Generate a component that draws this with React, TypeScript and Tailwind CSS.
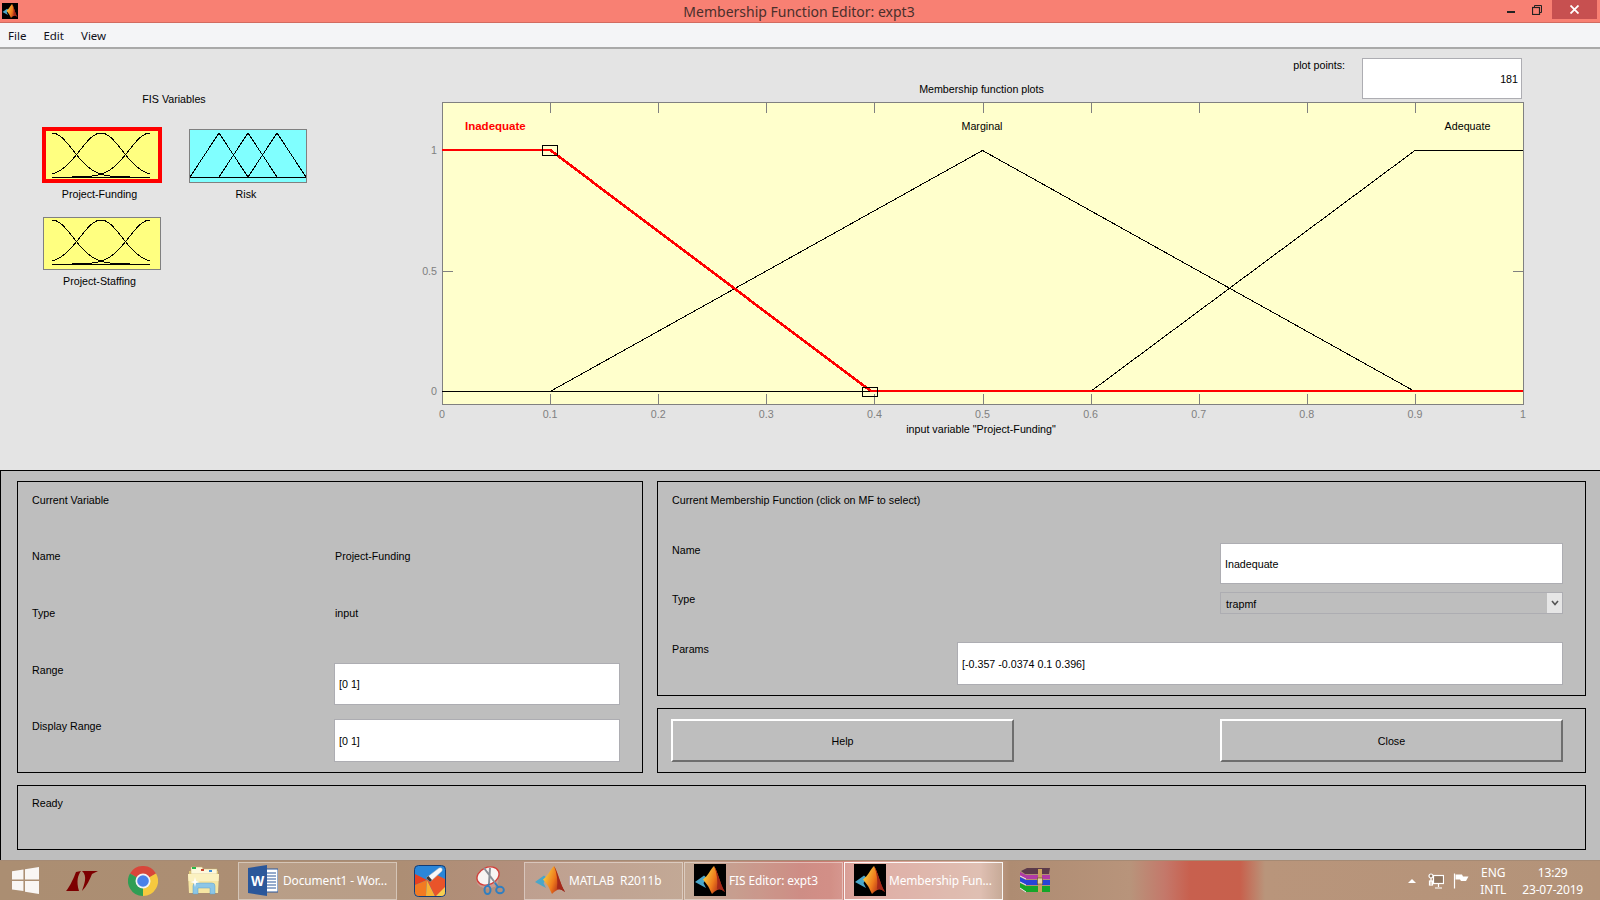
import React, { useId } from 'react';

const PX = (v: number) => 442 + 1081 * v;
const Y1 = 150.5;
const Y0 = 391.5;
const TICKS = [0, 0.1, 0.2, 0.3, 0.4, 0.5, 0.6, 0.7, 0.8, 0.9, 1];

// gaussian curve for the little mf thumbnails
function gaussPath(center: number) {
  const pts: string[] = [];
  for (let x = 9; x <= 107; x += 1) {
    const g = Math.exp(-((x - center) ** 2) / (2 * 21 * 21));
    pts.push(`${x},${(48 - 44 * g).toFixed(1)}`);
  }
  return `M${pts.join(' L')}`;
}

function GaussThumb() {
  return (
    <svg width="116" height="56" viewBox="0 0 116 56" className="block" shapeRendering="crispEdges">
      <path d={gaussPath(9)} fill="none" stroke="#000" />
      <path d={gaussPath(58)} fill="none" stroke="#000" />
      <path d={gaussPath(107)} fill="none" stroke="#000" />
      <path d="M9 48.5H107" stroke="#000" />
    </svg>
  );
}

function TriThumb() {
  return (
    <svg width="116" height="52" viewBox="0 0 116 52" className="block" shapeRendering="crispEdges">
      <path d="M0 47 L29 3 L58 47 M29 47 L58 3 L87 47 M58 47 L87 3 L116 47" fill="none" stroke="#000" />
      <path d="M0 47.5H116" stroke="#000" />
    </svg>
  );
}

function MatlabIcon({ black, size = 32 }: { black?: boolean; size?: number }) {
  const id = useId();
  return (
    <svg width={size} height={size} viewBox="0 0 32 32" className="shrink-0">
      <defs>
        <linearGradient id={id} x1="0.1" y1="0.3" x2="1" y2="0.7">
          <stop offset="0" stopColor="#f7c23a" />
          <stop offset="0.45" stopColor="#ee7a1c" />
          <stop offset="0.8" stopColor="#b5321a" />
          <stop offset="1" stopColor="#7d1c14" />
        </linearGradient>
      </defs>
      {black && <rect width="32" height="32" fill="#000" />}
      <path d="M1 18 L10 11.5 L13 14 L9.5 19 L12 24 Z" fill="#4aa6c9" />
      <path d="M9 15.5 C14 12 16 6 20 2 C24 8 26 20 31 28 C26 24 23 25 18 30 C16 26 15 23 12.5 20 Z" fill={`url(#${id})`} />
      <path d="M20 2 C24 8 26 20 31 28 C27 25 25 24 23 25 C24 17 23 9 20 2 Z" fill="#a3281a" />
    </svg>
  );
}

function WindowsLogo() {
  return (
    <svg width="27" height="27" viewBox="0 0 26 26">
      <g fill="#fff" fillOpacity="0.92">
        <polygon points="0,4 11,2.4 11,12 0,12" />
        <polygon points="12.5,2.2 26,0 26,12 12.5,12" />
        <polygon points="0,13.5 11,13.5 11,23 0,21.6" />
        <polygon points="12.5,13.5 26,13.5 26,26 12.5,23.8" />
      </g>
    </svg>
  );
}

function LtLogo() {
  return (
    <svg width="32" height="20" viewBox="0 0 32 20">
      <g fill="#7d0000">
        <path d="M10 1 L15 0 C12 4 10 10 13 20 L0 20 C3 17 6 10 8 6 Z" />
        <path d="M16 0 L32 0 L26 3 C24 8 21 15 16 20 C18 14 22 5 16 0 Z" />
      </g>
    </svg>
  );
}

function ChromeIcon() {
  return (
    <svg width="30" height="30" viewBox="0 0 30 30">
      <path d="M15 15 L2 7.5 A15 15 0 0 1 28 7.5 Z" fill="#d8463a" />
      <path d="M15 15 L28 7.5 A15 15 0 0 1 15 30 Z" fill="#f6c93f" />
      <path d="M15 15 L15 30 A15 15 0 0 1 2 7.5 Z" fill="#2f9e54" />
      <circle cx="15" cy="15" r="7.5" fill="#f4f4f4" />
      <circle cx="15" cy="15" r="5.8" fill="#4a80e8" />
    </svg>
  );
}

function FolderIcon() {
  return (
    <svg width="32" height="29" viewBox="0 0 32 29">
      <path d="M1 5 H30 V25 H1 Z" fill="#e0c878" />
      <path d="M3 1 H14 L15 3 H29 V8 H3 Z" fill="#fdf8dc" stroke="#cbb36a" strokeWidth="0.5" />
      <rect x="4" y="1" width="4" height="2" fill="#27b84a" />
      <rect x="13" y="3" width="3" height="2" fill="#c9472f" />
      <rect x="21" y="4" width="3" height="2" fill="#3e8fd8" />
      <path d="M0 8 H31 L30 27 H1 Z" fill="#f6e6a2" />
      <path d="M0 8 H31 L30.5 15 H0.5 Z" fill="#fbf1c0" />
      <path d="M5 28 V20 Q5 17 8 17 H24 Q27 17 27 20 V28 H22 V22 H10 V28 Z" fill="#8cc6e6" stroke="#5e9fc4" strokeWidth="0.5" />
      <path d="M7 11 L8 15 L12 16 L8 17 L7 21 L6 17 L2 16 L6 15 Z" fill="#fff" />
    </svg>
  );
}

function WordIcon() {
  return (
    <svg width="30" height="31" viewBox="0 0 30 31" className="mr-[2px]">
      <rect x="14" y="4" width="16" height="23" fill="#fff" stroke="#2b579a" />
      <path d="M18 8H28M18 11H28M18 14H28M18 17H28M18 20H28M18 23H28" stroke="#2b579a" />
      <path d="M0 3 L19 0 V31 L0 28 Z" fill="#2b579a" />
      <text x="9.5" y="21" textAnchor="middle" fill="#fff" fontSize="14" fontWeight="700" fontFamily="'Liberation Sans', sans-serif">W</text>
    </svg>
  );
}

function RocketIcon() {
  return (
    <svg width="32" height="32" viewBox="0 0 32 32">
      <rect x="0.5" y="0.5" width="31" height="31" rx="4" fill="#2a86d8" stroke="#123c74" />
      <path d="M13 15 L1 9 V20 Z" fill="#e8401f" />
      <path d="M13 15 L1 20 V27 Q1 31 5 31 H12 Z" fill="#f27a22" />
      <path d="M13 15 L12 31 H21 Z" fill="#f9b233" />
      <path d="M13 15 L21 31 H27 Q31 31 31 27 V14 L21 9 Z" fill="#e9542a" />
      <path d="M22 31 L31 22 V27 Q31 31 27 31 Z" fill="#f5cf52" />
      <path d="M12 13 L25 3 Q29 2 28 6 L16 17 Z" fill="#f8f8f8" stroke="#b9b9b9" strokeWidth="0.5" />
      <path d="M12 13 L14.5 11 L18 15 L16 17 Z" fill="#3a3a3a" />
    </svg>
  );
}

function ScissorsIcon() {
  return (
    <svg width="30" height="32" viewBox="0 0 30 32">
      <ellipse cx="11.5" cy="16" rx="11" ry="7.5" fill="#c99a90" />
      <ellipse cx="12" cy="11" rx="11.5" ry="8.5" transform="rotate(-25 12 11)" fill="#f7f4f2" stroke="#d23f3a" strokeWidth="1.4" />
      <path d="M8 3 L20 19 M14 3 L13 19" stroke="#8a8f96" strokeWidth="2" />
      <ellipse cx="11.5" cy="25" rx="3" ry="4" fill="none" stroke="#2f7fc1" strokeWidth="2" />
      <ellipse cx="24" cy="25" rx="3.8" ry="3.2" fill="none" stroke="#2f7fc1" strokeWidth="2" />
      <path d="M13 19 L12 21 M19 18 L22 22" stroke="#2f7fc1" strokeWidth="2" />
    </svg>
  );
}

function RarIcon() {
  return (
    <svg width="32" height="25" viewBox="0 0 32 25">
      <path d="M2 3 L8 0 H31 L30 6 H6 Z" fill="#5c3a4a" />
      <path d="M1 4 L7 7 H31 V11 H7 L1 8 Z" fill="#b23aa6" />
      <path d="M1 9 L7 12 H31 V17 H7 L1 14 Z" fill="#2743d8" />
      <path d="M1 15 L7 18 H31 V24 H7 L1 20 Z" fill="#15a629" />
      <path d="M1 8 L7 11 M1 14 L7 17 M1 20 L7 24" stroke="#eee" />
      <rect x="19" y="1" width="4" height="23" fill="#caa25e" />
      <rect x="18.5" y="10" width="5" height="6" fill="#e6d3a6" stroke="#6b4b22" strokeWidth="0.6" />
    </svg>
  );
}

function NetworkIcon() {
  return (
    <svg width="16" height="16" viewBox="0 0 16 16" fill="none" stroke="#fff" strokeWidth="1.2">
      <rect x="5.5" y="2.5" width="10" height="8" fill="#5a4a3e" fillOpacity="0.4" />
      <path d="M10.5 11V14M7 15H14" />
      <circle cx="3" cy="3" r="2" fill="#5a4a3e" fillOpacity="0.4" />
      <path d="M3 5V11" />
      <rect x="1.5" y="8" width="3" height="4" />
    </svg>
  );
}

function FlagIcon() {
  return (
    <svg width="16" height="16" viewBox="0 0 16 16">
      <path d="M1.5 0.5V15.5" stroke="#fff" strokeWidth="1.2" />
      <path d="M2.5 1.5 H9 L10 3.5 H15.5 L13 8 H8 L7 6.5 H2.5 Z" fill="#fff" />
    </svg>
  );
}

function Pin({ width, children }: { width: string; children: React.ReactNode }) {
  return <div className={`${width} h-full flex items-center justify-center shrink-0`}>{children}</div>;
}

function TaskButton({ icon, label, active }: { icon: React.ReactNode; label: string; active?: boolean }) {
  return (
    <div
      className={`w-[159px] h-[38px] mr-px shrink-0 flex items-center gap-[3px] pl-[9px] pb-px border ${
        active ? 'border-white/90 bg-white/20' : 'border-white/40 bg-white/15'
      }`}
    >
      {icon}
      <span className="text-[11.9px] text-white whitespace-pre tracking-[-0.1px]">{label}</span>
    </div>
  );
}

function Field({ value, className }: { value: string; className: string }) {
  return (
    <input
      readOnly
      value={value}
      className={`${className} bg-white border border-[#adadb2] pl-1 text-[10.7px] text-black outline-none`}
    />
  );
}

function PlotArea() {
  return (
    <svg width="1120" height="336" viewBox="420 102 1120 336" className="block -ml-[22px]">
      <rect x="442.5" y="102.5" width="1081" height="302" fill="#ffffcc" stroke="#808080" />
      <g stroke="#808080" shapeRendering="crispEdges">
        {TICKS.slice(1, -1).map((t) => (
          <path key={t} d={`M${Math.round(PX(t)) + 0.5} 103V113M${Math.round(PX(t)) + 0.5} 404V394`} />
        ))}
        <path d="M443 271.5H453M1523 271.5H1513" />
      </g>
      <g fontFamily="'Liberation Sans', sans-serif" fontSize="10.7" fill="#808080">
        {TICKS.map((t) => (
          <text key={t} x={PX(t)} y={418} textAnchor="middle">
            {t}
          </text>
        ))}
        <text x="437" y="154" textAnchor="end">1</text>
        <text x="437" y="275" textAnchor="end">0.5</text>
        <text x="437" y="395" textAnchor="end">0</text>
      </g>
      <g fontFamily="'Liberation Sans', sans-serif" fontSize="10.7" fill="#000">
        <text x="981" y="433" textAnchor="middle">input variable "Project-Funding"</text>
        <text x="982" y="130" textAnchor="middle">Marginal</text>
        <text x="1467.5" y="130" textAnchor="middle">Adequate</text>
        <text x="465" y="130" fill="#ff0000" fontWeight="700" fontSize="11.5">Inadequate</text>
      </g>
      <g fill="none" shapeRendering="crispEdges">
        <path d={`M442 ${Y0} H${PX(0.1)} L${PX(0.5)} ${Y1} L${PX(0.9)} ${Y0} H1523`} stroke="#000" />
        <path d={`M442 ${Y0} H${PX(0.6)} L${PX(0.9)} ${Y1} H1523`} stroke="#000" />
        <path d={`M442 ${Y1 - 0.5} H${PX(0.1)} M${PX(0.396)} 390.5 H1523`} stroke="#ff0000" strokeWidth="2" />
        <path d={`M${PX(0.1)} ${Y1 - 0.5} L${PX(0.396)} 390.5`} stroke="#ff0000" strokeWidth="2.6" />
        <rect x="542.5" y="145.5" width="15" height="10" stroke="#000" />
        <rect x="862.5" y="387.5" width="15" height="9" stroke="#000" />
      </g>
    </svg>
  );
}

export default function App() {
  return (
    <div className="w-[1600px] h-[900px] overflow-hidden flex flex-col font-['Liberation_Sans',sans-serif] text-[10.7px] leading-[14px] text-black">
      {/* window chrome */}
      <div className="h-[23px] shrink-0 bg-[#f88073] border-b border-[#d26b60] flex items-center relative">
        <div className="ml-[2px]">
          <MatlabIcon black size={16} />
        </div>
        <span className="flex-1 text-center pl-[73px] pt-px text-[14px] text-[#4a2f2b] font-['Noto_Sans',sans-serif] leading-[22px]">
          Membership Function Editor: expt3
        </span>
        <div className="flex items-start self-start h-[19px]">
          <span className="mt-[11px] w-2 h-[2px] bg-[#222] mr-[17px]" />
          <svg width="10" height="10" viewBox="0 0 10 10" fill="none" stroke="#222" className="mt-[5px] mr-[10px]">
            <rect x="0.5" y="2.5" width="7" height="7" strokeWidth="1.2" />
            <path d="M2.5 2V0.5H9.5V7.5H8" />
          </svg>
          <div className="w-[45px] h-[19px] bg-[#c75050] flex items-center justify-center mr-[3px]">
            <svg width="9" height="9" viewBox="0 0 9 9" stroke="#fff" strokeWidth="1.8">
              <path d="M0.5 0.5L8.5 8.5M8.5 0.5L0.5 8.5" />
            </svg>
          </div>
        </div>
      </div>
      <div className="h-[26px] shrink-0 bg-[#f4f5f7] border-b-2 border-[#a9a9a9] flex items-center gap-[17px] pl-2 pt-px text-[11.5px] text-[#10101a] font-['Noto_Sans',sans-serif]">
        <span>File</span>
        <span>Edit</span>
        <span>View</span>
      </div>

      {/* upper part: variables + plot */}
      <div className="h-[421px] shrink-0 bg-[#e4e4e4] flex">
        <div className="w-[442px] shrink-0 pl-[42px] pt-[43px]">
          <div className="w-[264px] text-center">FIS Variables</div>
          <div className="grid grid-cols-[120px_118px] gap-x-[27px] mt-[21px]">
            <div>
              <div className="h-[56px] border-[4px] border-[#ff0000] bg-[#ffff80] overflow-hidden">
                <div className="-mt-[2px] -ml-[3px]">
                  <GaussThumb />
                </div>
              </div>
              <div className="text-center mt-[4px] pr-[5px]">Project-Funding</div>
            </div>
            <div className="pt-[2px]">
              <div className="h-[54px] border border-[#808080] bg-[#80ffff] overflow-hidden">
                <TriThumb />
              </div>
              <div className="text-center mt-[4px] pr-[4px]">Risk</div>
            </div>
            <div className="pt-[16px] pl-px">
              <div className="w-[118px] h-[53px] border border-[#808080] bg-[#ffff80] overflow-hidden">
                <div className="-mt-[2px] -ml-[1px]">
                  <GaussThumb />
                </div>
              </div>
              <div className="w-[118px] text-center mt-[4px] pr-[5px]">Project-Staffing</div>
            </div>
          </div>
        </div>
        <div className="w-[1081px] shrink-0 pt-[9px]">
          <div className="grid h-[44px]">
            <div className="col-start-1 row-start-1 justify-self-center self-end mb-[6px] pr-[2px]">Membership function plots</div>
            <div className="col-start-1 row-start-1 justify-self-end flex items-start mr-px">
              <span className="mr-[17px]">plot points:</span>
              <input
                readOnly
                value="181"
                className="w-[160px] h-[41px] bg-white border border-[#adadb2] pr-[3px] text-right text-[10.7px] outline-none"
              />
            </div>
          </div>
          <PlotArea />
        </div>
      </div>

      {/* lower part: editors */}
      <div className="h-[390px] shrink-0 bg-[#bebebe] border-t border-l border-black pl-4 pt-[10px]">
        <div className="grid grid-cols-[626px_929px] gap-x-[14px]">
          <div className="row-span-2 h-[292px] border border-black px-[14px] pt-[11px]">
            <div className="h-[56px]">Current Variable</div>
            <div className="grid grid-cols-[303px_286px] grid-rows-[57px_57px_56px_43px] -mr-px">
              <span>Name</span>
              <span>Project-Funding</span>
              <span>Type</span>
              <span>input</span>
              <span>Range</span>
              <Field value="[0 1]" className="h-[42px] w-[286px] -ml-px" />
              <span>Display Range</span>
              <Field value="[0 1]" className="h-[43px] w-[286px] -ml-px" />
            </div>
          </div>
          <div className="h-[215px] border border-black pl-[14px] pr-[22px] pt-[11px]">
            <div className="h-[50px]">Current Membership Function (click on MF to select)</div>
            <div className="flex justify-between">
              <span>Name</span>
              <Field value="Inadequate" className="h-[41px] w-[343px]" />
            </div>
            <div className="flex justify-between mt-[8px]">
              <span>Type</span>
              <div className="w-[343px] h-[22px] border border-[#adadb2] flex items-center justify-between pl-[5px]">
                <span className="pt-px">trapmf</span>
                <div className="w-[15px] h-full bg-[#e6e6e6] flex items-center justify-center">
                  <svg width="8" height="6" viewBox="0 0 8 6" fill="none" stroke="#555" strokeWidth="1.6">
                    <path d="M1 1L4 4.5L7 1" />
                  </svg>
                </div>
              </div>
            </div>
            <div className="flex justify-between mt-[28px]">
              <span>Params</span>
              <Field value="[-0.357 -0.0374 0.1 0.396]" className="h-[43px] w-[606px]" />
            </div>
          </div>
          <div className="h-[65px] mt-[12px] border border-black pl-[13px] pr-[22px] pt-[10px] flex justify-between items-start">
            <button className="w-[343px] h-[43px] border-2 border-t-white border-l-white border-b-[#6e6e6e] border-r-[#6e6e6e]">Help</button>
            <button className="w-[343px] h-[43px] border-2 border-t-white border-l-white border-b-[#6e6e6e] border-r-[#6e6e6e]">Close</button>
          </div>
          <div className="col-span-2 h-[65px] mt-[12px] border border-black px-[14px] pt-[10px]">Ready</div>
        </div>
      </div>

      {/* taskbar */}
      <div className="h-[40px] shrink-0 flex items-center border-t border-[#a58a74] font-['Noto_Sans',sans-serif] bg-[linear-gradient(90deg,#ab8e72_0px,#ad8e74_400px,#b38f7c_520px,#b99a84_690px,#c67a70_800px,#cb7c72_830px,#d89a90_870px,#d8b0a0_980px,#ae8c72_1010px,#b8947b_1130px,#c4786a_1165px,#c8604e_1190px,#c8604c_1240px,#b9957b_1265px,#b39379_1600px)]">
        <Pin width="w-[50px]"><WindowsLogo /></Pin>
        <Pin width="w-[64px]"><LtLogo /></Pin>
        <Pin width="w-[58px]"><ChromeIcon /></Pin>
        <Pin width="w-[64px]"><FolderIcon /></Pin>
        <div className="w-[2px] shrink-0" />
        <TaskButton icon={<WordIcon />} label="Document1 - Wor..." />
        <Pin width="w-[63px]"><RocketIcon /></Pin>
        <Pin width="w-[60px]"><ScissorsIcon /></Pin>
        <div className="w-[3px] shrink-0" />
        <TaskButton icon={<MatlabIcon />} label="MATLAB  R2011b" />
        <TaskButton icon={<MatlabIcon black />} label="FIS Editor: expt3" />
        <TaskButton icon={<MatlabIcon black />} label="Membership Fun..." active />
        <Pin width="w-[62px]"><RarIcon /></Pin>
        <div className="flex-1" />
        <div className="flex items-center text-white text-[12px] leading-[17px] mr-[17px]">
          <span className="w-0 h-0 border-x-[4px] border-x-transparent border-b-[4px] border-b-white mr-[12px]" />
          <div className="mr-[9px]"><NetworkIcon /></div>
          <div className="mr-[11px]"><FlagIcon /></div>
          <div className="text-center mr-[16px]">
            <div>ENG</div>
            <div>INTL</div>
          </div>
          <div className="text-center tracking-[-0.2px]">
            <div>13:29</div>
            <div>23-07-2019</div>
          </div>
        </div>
      </div>
    </div>
  );
}
